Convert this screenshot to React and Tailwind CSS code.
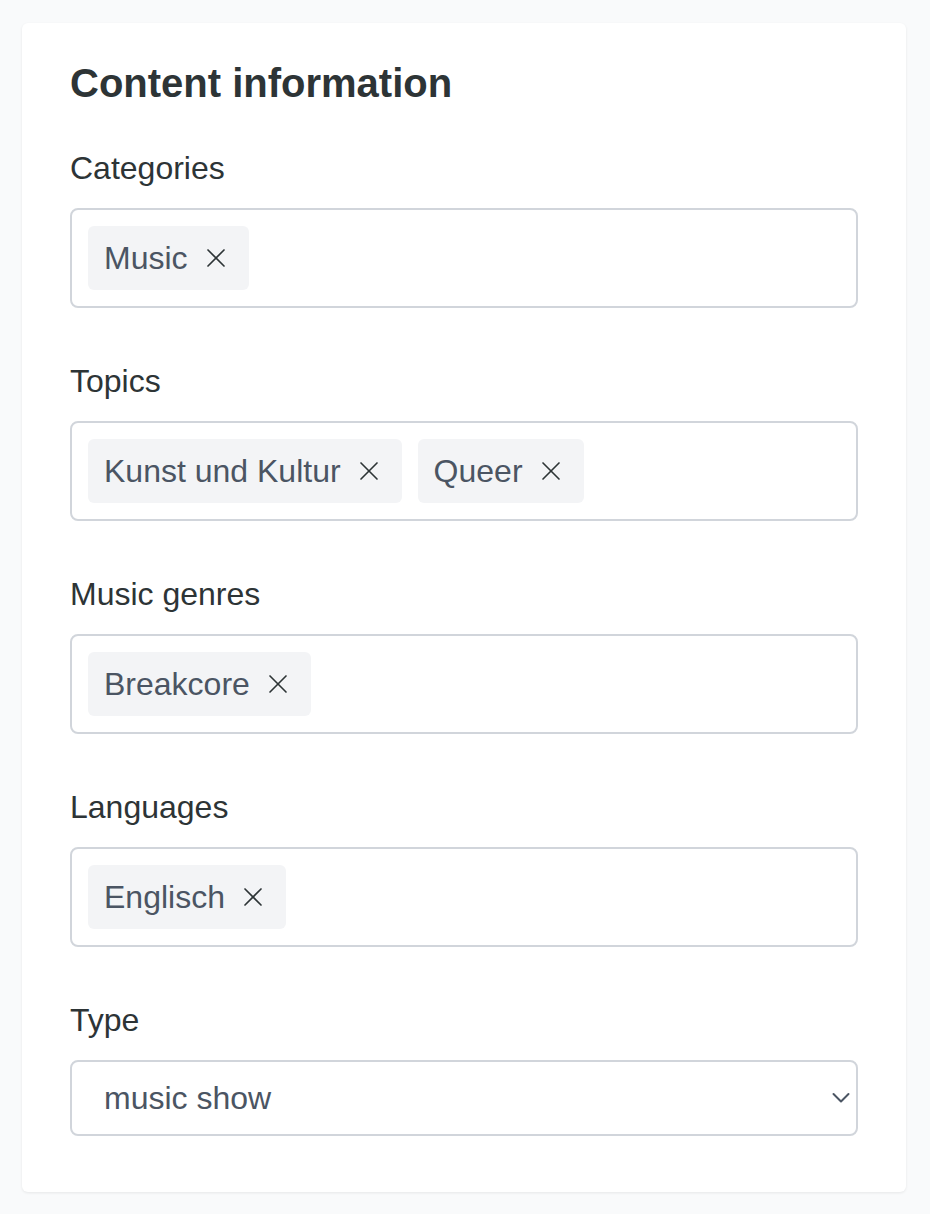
import React, { useState } from "react";

const fields = [
  { label: "Categories", tags: ["Music"] },
  { label: "Topics", tags: ["Kunst und Kultur", "Queer"] },
  { label: "Music genres", tags: ["Breakcore"] },
  { label: "Languages", tags: ["Englisch"] },
];

function XIcon() {
  return (
    <svg
      width="32"
      height="32"
      viewBox="0 0 24 24"
      fill="none"
      stroke="currentColor"
      strokeWidth="1.25"
      strokeLinecap="round"
      className="ml-3 shrink-0 text-[#2d3436]"
    >
      <path d="M18 6 6 18" />
      <path d="m6 6 12 12" />
    </svg>
  );
}

function TagField({ label, tags }) {
  const [items, setItems] = useState(tags);

  return (
    <div className="mb-[49px]">
      <label className="block text-[32px] leading-[48px] mb-4 text-[#2d3436]">
        {label}
      </label>
      <div className="h-[100px] border-2 border-[#d1d5db] rounded-lg p-4 flex gap-4 items-start">
        {items.map((tag) => (
          <span
            key={tag}
            className="flex items-center h-16 pl-4 pr-[17px] py-2 bg-[#f3f4f6] rounded-md text-[32px] leading-[48px] text-[#4b5563]"
          >
            {tag}
            <button
              type="button"
              onClick={() => setItems(items.filter((t) => t !== tag))}
              className="flex"
            >
              <XIcon />
            </button>
          </span>
        ))}
      </div>
    </div>
  );
}

export default function App() {
  return (
    <div
      className="min-h-[1214px] bg-[#f9fafb] pt-[23px] pb-[22px] pl-[22px] pr-[24px]"
      style={{ fontFamily: '"Liberation Sans", Arial, sans-serif' }}
    >
      <div className="bg-white rounded-md shadow-[0_1px_3px_rgba(0,0,0,0.08)] px-12 pt-9 pb-14">
        <h2 className="text-[40px] leading-[48px] font-bold text-[#2d3436] mb-[37px]">
          Content information
        </h2>

        {fields.map((f) => (
          <TagField key={f.label} label={f.label} tags={f.tags} />
        ))}

        {/* Type select */}
        <label className="block text-[32px] leading-[48px] mb-4 text-[#2d3436]">
          Type
        </label>
        <div className="relative">
          <select
            defaultValue="music show"
            className="appearance-none w-full h-[76px] border-2 border-[#d1d5db] rounded-lg bg-white pl-8 pr-12 py-3 text-[32px] leading-[48px] text-[#4b5563] outline-none"
            style={{ fontFamily: '"Liberation Sans", Arial, sans-serif' }}
          >
            <option>music show</option>
            <option>talk show</option>
            <option>podcast</option>
          </select>
          <svg
            width="18"
            height="12"
            viewBox="0 0 18 12"
            fill="none"
            stroke="#4b5563"
            strokeWidth="2"
            strokeLinecap="round"
            strokeLinejoin="round"
            className="absolute right-[8px] top-[32px] pointer-events-none"
          >
            <path d="M1.5 2 9 9.5 16.5 2" />
          </svg>
        </div>
      </div>
    </div>
  );
}
